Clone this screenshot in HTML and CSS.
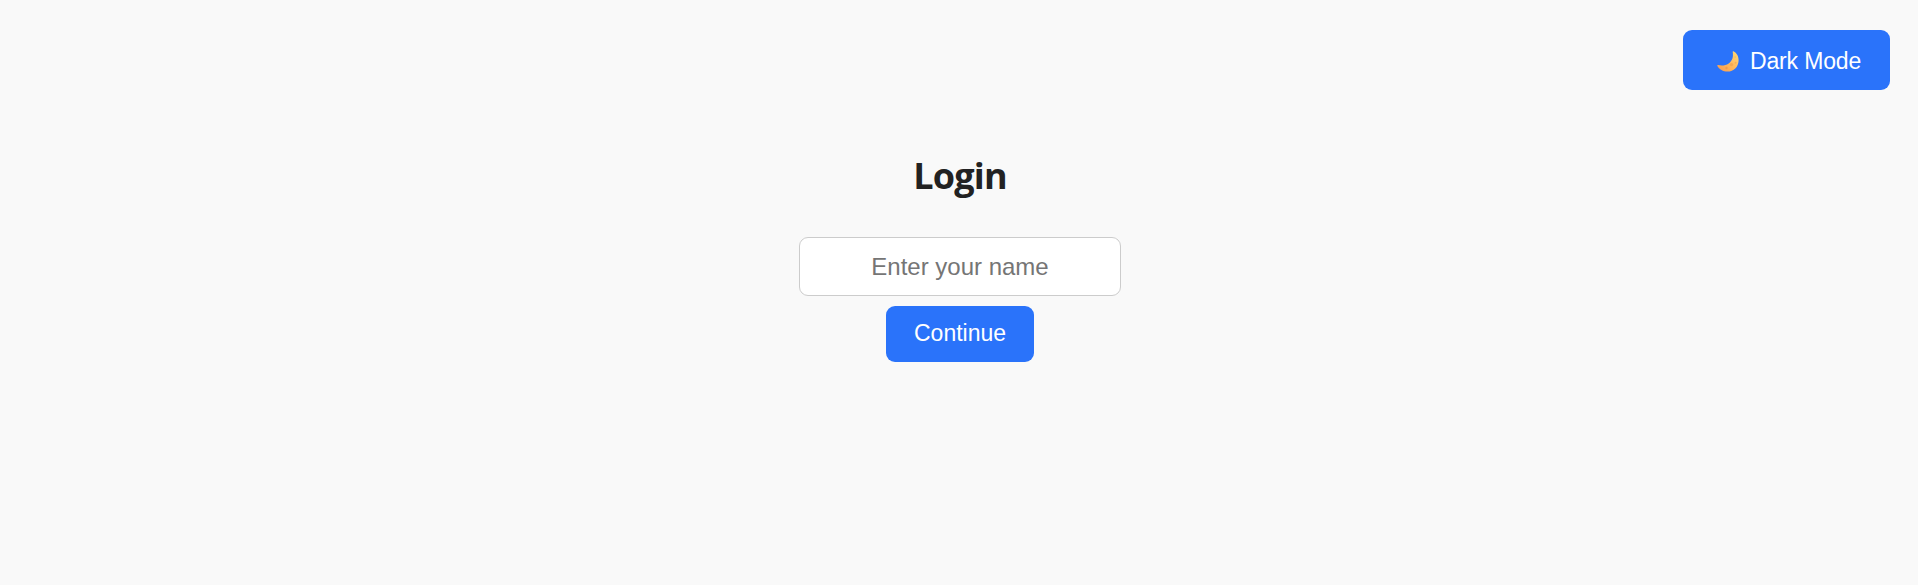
FILE: index.html
```html
<!DOCTYPE html>
<html lang="en">
<head>
<meta charset="utf-8">
<title>Login</title>
<link rel="stylesheet" href="styles.css">
</head>
<body>
<header class="topbar">
  <button class="button theme-toggle" type="button">
    <svg class="moon" viewBox="0 0 22 21" aria-hidden="true">
      <defs>
        <linearGradient id="moon-fill" x1="0" y1="1" x2="1" y2="0">
          <stop offset="0" stop-color="#f99a51"/>
          <stop offset=".5" stop-color="#fdb95c"/>
          <stop offset="1" stop-color="#ffdc78"/>
        </linearGradient>
      </defs>
      <path fill="url(#moon-fill)" d="M16.4.2C19.8 1.9 21.8 5.5 21.6 9.7C21.3 16 16.800 20.600 10.500 20.600C6 20.600 2.200 18.300.4 15C.1 14.300.6 13.800 1.300 14C4.500 14.900 8.500 14.600 11.700 12.400C15.200 10 16.600 6 15.700 1C15.600.4 15.900 0 16.400.2Z"/>
      <circle cx="14.500" cy="13.600" r="1.700" fill="#eea04d" opacity=".65"/>
      <circle cx="18.600" cy="11.800" r="1" fill="#eea04d" opacity=".6"/>
      <circle cx="9.500" cy="17" r="1.200" fill="#e98f48" opacity=".6"/>
      <circle cx="18.200" cy="6" r=".8" fill="#efb057" opacity=".7"/>
    </svg>
    <span>Dark Mode</span>
  </button>
</header>
<main class="login">
  <h1 class="title">Login</h1>
  <input class="name-input" type="text" placeholder="Enter your name" aria-label="Name">
  <button class="button continue" type="button">Continue</button>
</main>
</body>
</html>
```
FILE: styles.css
```css
* {
  box-sizing: border-box;
}

body {
  margin: 0;
  min-height: 585px;
  background: #f9f9f9;
  color: #222;
  font-family: "Liberation Sans", Arial, sans-serif;
}

.topbar {
  display: flex;
  justify-content: flex-end;
  padding: 30px 28px 0 0;
}

.button {
  border: 0;
  border-radius: 9px;
  padding: 0 28px;
  background: #2a73fa;
  color: #fff;
  font: 23px "Liberation Sans", Arial, sans-serif;
}

.theme-toggle {
  display: flex;
  align-items: center;
  width: 207px;
  height: 60px;
  padding: 2px 28px 0 34px;
  letter-spacing: -0.15px;
  white-space: nowrap;
}

.moon {
  flex: none;
  width: 22px;
  height: 21px;
  margin: 1px 11px 0 0;
}

.login {
  display: flex;
  flex-direction: column;
  align-items: center;
  padding: 60px 0 0 2px;
}

.title {
  margin: 0 0 36px;
  font: bold 36px/51px "Open Sans", sans-serif;
  letter-spacing: -0.8px;
}

.name-input {
  width: 322px;
  height: 59px;
  margin-bottom: 10px;
  border: 1px solid #ccc;
  border-radius: 9px;
  background: #fff;
  font: 24px "Liberation Sans", Arial, sans-serif;
  text-align: center;
}

.name-input::placeholder {
  color: #757575;
}

.continue {
  width: 148px;
  height: 56px;
  padding-bottom: 2px;
}
```
